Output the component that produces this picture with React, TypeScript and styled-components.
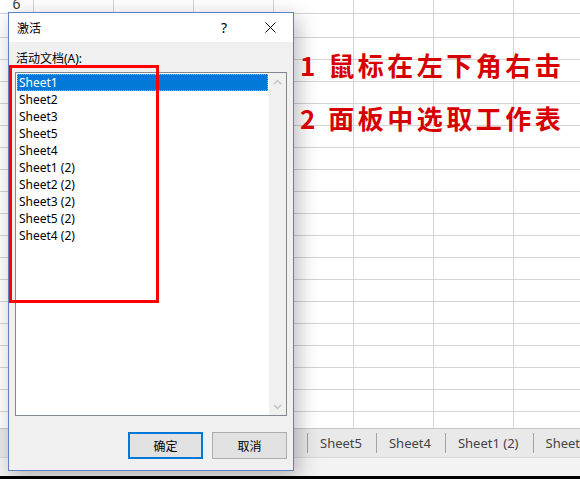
import React from "react";
import styled, { createGlobalStyle } from "styled-components";

const UI = `"Noto Sans", "Noto Sans CJK SC", sans-serif`;

const GlobalStyle = createGlobalStyle`
  html, body { margin: 0; padding: 0; background: #fff; }
  body { font-family: ${UI}; }
  #root { width: 580px; height: 479px; }
`;

const Screen = styled.div`
  position: relative;
  width: 580px;
  height: 479px;
  overflow: hidden;
  background: #fff;
  display: flex;
  flex-direction: column;
  font-family: ${UI};
`;

/* ---------- spreadsheet background ---------- */
const Grid = styled.div`
  flex: none;
  height: 428px;
  display: flex;
  flex-direction: column;
  overflow: hidden;
`;

const Row = styled.div<{ $h: number; $last?: boolean }>`
  flex: none;
  display: flex;
  height: ${(p) => p.$h}px;
  box-sizing: border-box;
  border-bottom: ${(p) => (p.$last ? "none" : "1px solid #d4d4d4")};
`;

const RowHeader = styled.div`
  flex: none;
  width: 34px;
  box-sizing: border-box;
  border-right: 1px solid #d4d4d4;
  display: flex;
  align-items: flex-end;
  justify-content: center;
  padding-bottom: 2px;
  font-size: 14px;
  line-height: 14px;
  color: #333;
`;

const Cell = styled.div`
  flex: none;
  width: 80px;
  box-sizing: border-box;
  border-right: 1px solid #d4d4d4;
`;

const TabBar = styled.div`
  flex: none;
  height: 29px;
  box-sizing: border-box;
  border-top: 1px solid #c8c8c8;
  background: #e9e9e9;
  display: flex;
  align-items: center;
  overflow: hidden;
`;

/* navigation buttons and the first tabs, all covered by the dialog */
const TabNav = styled.div`
  flex: none;
  width: 307px;
`;

const Tab = styled.div`
  flex: none;
  height: 20px;
  line-height: 20px;
  border-left: 1px solid #a3a3a3;
  padding: 0 14px 0 12px;
  font-size: 13px;
  color: #444;
  white-space: nowrap;
`;

const StatusBar = styled.div`
  flex: none;
  height: 19px;
  box-sizing: border-box;
  border-top: 1px solid #dadada;
  background: #f3f3f3;
`;

const Taskbar = styled.div`
  flex: none;
  height: 3px;
  background: #000;
`;

/* ---------- dialog ---------- */
const Dialog = styled.div`
  position: absolute;
  left: 8px;
  top: 12px;
  width: 286px;
  height: 459px;
  box-sizing: border-box;
  border: 1px solid #5d80c6;
  background: #f0f0f0;
  display: flex;
  flex-direction: column;
  box-shadow: 4px 6px 20px rgba(0, 0, 0, 0.28);
  font-family: ${UI};
  font-size: 12px;
  color: #000;
`;

const TitleBar = styled.div`
  flex: none;
  height: 29px;
  background: #fff;
  display: flex;
  align-items: center;
`;

const Title = styled.div`
  flex: 1;
  padding-left: 8px;
  font-size: 12px;
`;

const CaptionButton = styled.div`
  flex: none;
  width: 46px;
  height: 29px;
  display: flex;
  align-items: center;
  justify-content: center;
  font-size: 14px;
  color: #000;
`;

const Body = styled.div`
  flex: 1;
  display: flex;
  flex-direction: column;
  padding: 9px 6px 11px 6px;
`;

const Label = styled.div`
  height: 16px;
  line-height: 16px;
  margin-bottom: 5px;
  padding-left: 1px;
  color: #000;
`;

const ListBox = styled.div`
  flex: none;
  height: 344px;
  box-sizing: border-box;
  border: 1px solid #828790;
  background: #fff;
  display: flex;
`;

const Items = styled.div`
  flex: 1;
  padding: 1px;
  display: flex;
  flex-direction: column;
`;

const Item = styled.div<{ $selected?: boolean }>`
  flex: none;
  height: 17px;
  box-sizing: border-box;
  line-height: 15px;
  padding-left: 1px;
  border: 1px dotted ${(p) => (p.$selected ? "#f0a030" : "transparent")};
  background: ${(p) => (p.$selected ? "#0078d7" : "transparent")};
  color: ${(p) => (p.$selected ? "#fff" : "#000")};
  white-space: nowrap;
`;

const ScrollBar = styled.div`
  flex: none;
  width: 17px;
  background: #f0f0f0;
  display: flex;
  flex-direction: column;
  justify-content: space-between;
`;

const ScrollArrow = styled.div`
  height: 17px;
  display: flex;
  align-items: center;
  justify-content: center;
`;

const ButtonRow = styled.div`
  margin-top: 16px;
  display: flex;
  justify-content: flex-end;
  gap: 9px;
`;

const Button = styled.button<{ $default?: boolean }>`
  width: 75px;
  height: 27px;
  box-sizing: border-box;
  padding: 0;
  background: #e1e1e1;
  border: ${(p) => (p.$default ? "2px solid #0078d7" : "1px solid #adadad")};
  font-family: ${UI};
  font-size: 12px;
  color: #000;
`;

/* ---------- annotations ---------- */
const Notes = styled.div`
  position: absolute;
  left: 300px;
  top: 52px;
  display: flex;
  flex-direction: column;
  gap: 27px;
  font-family: "Noto Sans CJK SC", sans-serif;
  font-weight: 700;
  font-size: 26px;
  line-height: 26px;
  letter-spacing: 3.5px;
  color: #d60000;
  white-space: nowrap;
`;

const Highlight = styled.div`
  position: absolute;
  left: 9px;
  top: 65px;
  width: 150px;
  height: 238px;
  box-sizing: border-box;
  border: 3px solid #ff0000;
  pointer-events: none;
`;

const rowHeights = [14, 24, ...Array(17).fill(22), 16];
const sheets = [
  "Sheet1",
  "Sheet2",
  "Sheet3",
  "Sheet5",
  "Sheet4",
  "Sheet1 (2)",
  "Sheet2 (2)",
  "Sheet3 (2)",
  "Sheet5 (2)",
  "Sheet4 (2)",
];
const tabs = ["Sheet5", "Sheet4", "Sheet1 (2)", "Sheet2 (2)"];

const Chevron = ({ up }: { up?: boolean }) => (
  <svg width="9" height="6" viewBox="0 0 9 6">
    <path
      d={up ? "M1 5 L4.5 1.5 L8 5" : "M1 1 L4.5 4.5 L8 1"}
      fill="none"
      stroke="#c2c2c2"
      strokeWidth="1.5"
    />
  </svg>
);

export default function App() {
  return (
    <>
      <GlobalStyle />
      <Screen>
        <Grid>
          {rowHeights.map((h, i) => (
            <Row key={i} $h={h} $last={i === rowHeights.length - 1}>
              <RowHeader>{i === 0 ? 6 : null}</RowHeader>
              {Array.from({ length: 7 }).map((_, c) => (
                <Cell key={c} />
              ))}
            </Row>
          ))}
        </Grid>
        <TabBar>
          <TabNav />
          {tabs.map((t) => (
            <Tab key={t}>{t}</Tab>
          ))}
        </TabBar>
        <StatusBar />
        <Taskbar />

        <Dialog>
          <TitleBar>
            <Title>激活</Title>
            <CaptionButton>?</CaptionButton>
            <CaptionButton>
              <svg width="11" height="11" viewBox="0 0 11 11">
                <path d="M0.5 0.5 L10.5 10.5 M10.5 0.5 L0.5 10.5" stroke="#000" strokeWidth="1" />
              </svg>
            </CaptionButton>
          </TitleBar>
          <Body>
            <Label>活动文档(A):</Label>
            <ListBox>
              <Items>
                {sheets.map((s, i) => (
                  <Item key={s} $selected={i === 0}>
                    {s}
                  </Item>
                ))}
              </Items>
              <ScrollBar>
                <ScrollArrow>
                  <Chevron up />
                </ScrollArrow>
                <ScrollArrow>
                  <Chevron />
                </ScrollArrow>
              </ScrollBar>
            </ListBox>
            <ButtonRow>
              <Button $default>确定</Button>
              <Button>取消</Button>
            </ButtonRow>
          </Body>
        </Dialog>

        <Highlight />

        <Notes>
          <div>1 鼠标在左下角右击</div>
          <div>2 面板中选取工作表</div>
        </Notes>
      </Screen>
    </>
  );
}
